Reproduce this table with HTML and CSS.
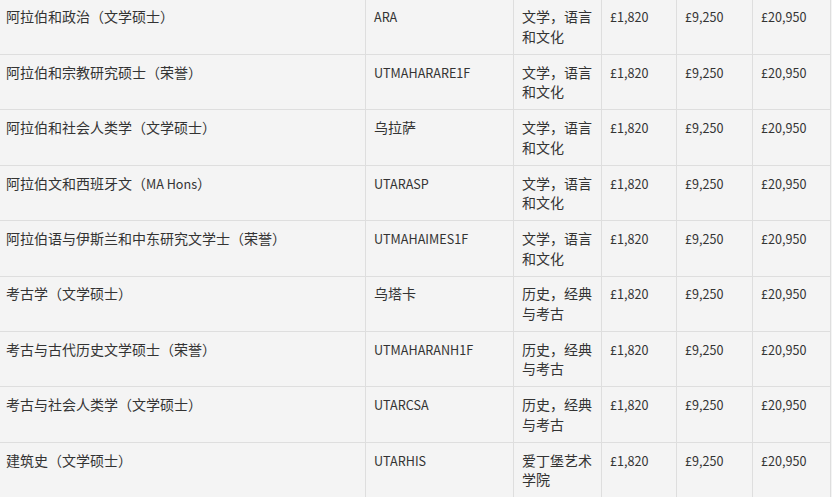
FILE: index.html
```html
<!DOCTYPE html>
<html lang="zh">
<head>
<meta charset="utf-8">
<link rel="stylesheet" href="styles.css">
</head>
<body>
<table class="fees">
<colgroup>
<col class="c-name"><col class="c-code"><col class="c-school"><col class="c-fee1"><col class="c-fee2"><col class="c-fee3">
</colgroup>
<tbody>
<tr><td>阿拉伯和政治（文学硕士）</td><td class="latin">ARA</td><td>文学，语言和文化</td><td class="latin">£1,820</td><td class="latin">£9,250</td><td class="latin">£20,950</td></tr>
<tr><td>阿拉伯和宗教研究硕士（荣誉）</td><td class="latin">UTMAHARARE1F</td><td>文学，语言和文化</td><td class="latin">£1,820</td><td class="latin">£9,250</td><td class="latin">£20,950</td></tr>
<tr><td>阿拉伯和社会人类学（文学硕士）</td><td>乌拉萨</td><td>文学，语言和文化</td><td class="latin">£1,820</td><td class="latin">£9,250</td><td class="latin">£20,950</td></tr>
<tr><td>阿拉伯文和西班牙文（<span class="latin">MA Hons</span>）</td><td class="latin">UTARASP</td><td>文学，语言和文化</td><td class="latin">£1,820</td><td class="latin">£9,250</td><td class="latin">£20,950</td></tr>
<tr><td>阿拉伯语与伊斯兰和中东研究文学士（荣誉）</td><td class="latin">UTMAHAIMES1F</td><td>文学，语言和文化</td><td class="latin">£1,820</td><td class="latin">£9,250</td><td class="latin">£20,950</td></tr>
<tr><td>考古学（文学硕士）</td><td>乌塔卡</td><td>历史，经典与考古</td><td class="latin">£1,820</td><td class="latin">£9,250</td><td class="latin">£20,950</td></tr>
<tr><td>考古与古代历史文学硕士（荣誉）</td><td class="latin">UTMAHARANH1F</td><td>历史，经典与考古</td><td class="latin">£1,820</td><td class="latin">£9,250</td><td class="latin">£20,950</td></tr>
<tr><td>考古与社会人类学（文学硕士）</td><td class="latin">UTARCSA</td><td>历史，经典与考古</td><td class="latin">£1,820</td><td class="latin">£9,250</td><td class="latin">£20,950</td></tr>
<tr><td>建筑史（文学硕士）</td><td class="latin">UTARHIS</td><td>爱丁堡艺术学院</td><td class="latin">£1,820</td><td class="latin">£9,250</td><td class="latin">£20,950</td></tr>
</tbody>
</table>
</body>
</html>
```

FILE: styles.css
```css
html, body {
  margin: 0;
  padding: 0;
  background: #f4f4f4;
}
body {
  font-family: "Noto Sans CJK SC", "Open Sans", sans-serif;
  font-size: 14px;
  color: #333333;
}
.fees {
  border-collapse: separate;
  border-spacing: 0;
  table-layout: fixed;
  width: 831px;
}
.c-name { width: 366px; }
.c-code { width: 148px; }
.c-school { width: 88px; }
.c-fee1 { width: 75px; }
.c-fee2 { width: 76px; }
.c-fee3 { width: 78px; }
.fees td {
  box-sizing: border-box;
  vertical-align: top;
  text-align: left;
  line-height: 19.7px;
  padding: 7.7px 8px 7.3px 8px;
  border-right: 1px solid #dedede;
  border-bottom: 1px solid #dedede;
  word-break: break-all;
}
.fees td:first-child {
  padding-left: 6px;
}
.fees tr:first-child td {
  padding-top: 7.4px;
}
.latin {
  font-size: 12.6px;
}
```
